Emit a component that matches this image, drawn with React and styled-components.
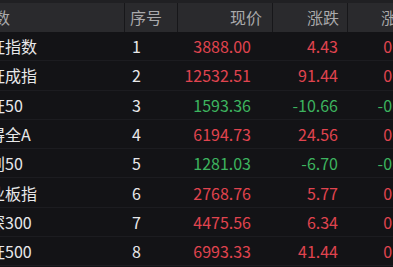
import React from "react";
import styled, { createGlobalStyle } from "styled-components";

const Global = createGlobalStyle`
  html, body { margin: 0; padding: 0; background: #131316; overflow: hidden; }
  body { font-family: "Noto Sans CJK SC", "Noto Sans", sans-serif; }
`;

const Page = styled.div`
  width: 393px;
  height: 267px;
  overflow: hidden;
  background: #131316;
`;

const Table = styled.div`
  margin-left: -40px;
  width: 488px;
`;

const cols = "165px 53px 95px 75px 100px";

const HeaderRow = styled.div`
  display: grid;
  grid-template-columns: ${cols};
  height: 32px;
  box-sizing: border-box;
  border-top: 3px solid #202023;
  background: #2a2a2d;
`;

const HeadCell = styled.div`
  display: flex;
  align-items: center;
  justify-content: ${(p) => (p.$align === "right" ? "flex-end" : "flex-start")};
  padding: 0 ${(p) => p.$pr || 0}px 1px ${(p) => p.$pl || 0}px;
  border-right: 1px solid #17171a;
  color: #a9a9ab;
  font-size: 16px;
  line-height: 1;
  white-space: nowrap;
  overflow: hidden;
`;

const Row = styled.div`
  display: grid;
  grid-template-columns: ${cols};
  height: 29.3px;
  box-sizing: border-box;
  border-bottom: 1px solid #1c1c20;
`;

const Cell = styled.div`
  display: flex;
  align-items: center;
  justify-content: ${(p) => (p.$align === "right" ? "flex-end" : "flex-start")};
  padding: 0 ${(p) => p.$pr || 0}px 0 ${(p) => p.$pl || 0}px;
  font-size: 16px;
  line-height: 1;
  white-space: nowrap;
  color: ${(p) =>
    p.$tone === "up" ? "#e0444f" : p.$tone === "down" ? "#3db35f" : "#e8e8ea"};
`;

const data = [
  ["上证指数", "3888.00", "4.43", "0.11%"],
  ["深证成指", "12532.51", "91.44", "0.73%"],
  ["上证50", "1593.36", "-10.66", "-0.66%"],
  ["万得全A", "6194.73", "24.56", "0.40%"],
  ["科创50", "1281.03", "-6.70", "-0.52%"],
  ["创业板指", "2768.76", "5.77", "0.21%"],
  ["沪深300", "4475.56", "6.34", "0.14%"],
  ["中证500", "6993.33", "41.44", "0.60%"],
];

export default function App() {
  return (
    <Page>
      <Global />
      <Table>
        <HeaderRow>
          <HeadCell $pl={18}>指数</HeadCell>
          <HeadCell $pl={5}>序号</HeadCell>
          <HeadCell $align="right" $pr={10}>现价</HeadCell>
          <HeadCell $align="right" $pr={8}>涨跌</HeadCell>
          <HeadCell $pl={33}>涨幅</HeadCell>
        </HeaderRow>
        {data.map(([name, price, chg, pct], i) => {
          const tone = chg.startsWith("-") ? "down" : "up";
          return (
            <Row key={name}>
              <Cell $pl={13}>{name}</Cell>
              <Cell $pl={7}>{i + 1}</Cell>
              <Cell $align="right" $pr={22} $tone={tone}>{price}</Cell>
              <Cell $align="right" $pr={10} $tone={tone}>{chg}</Cell>
              <Cell $align="right" $pr={19} $tone={tone}>{pct}</Cell>
            </Row>
          );
        })}
      </Table>
    </Page>
  );
}
